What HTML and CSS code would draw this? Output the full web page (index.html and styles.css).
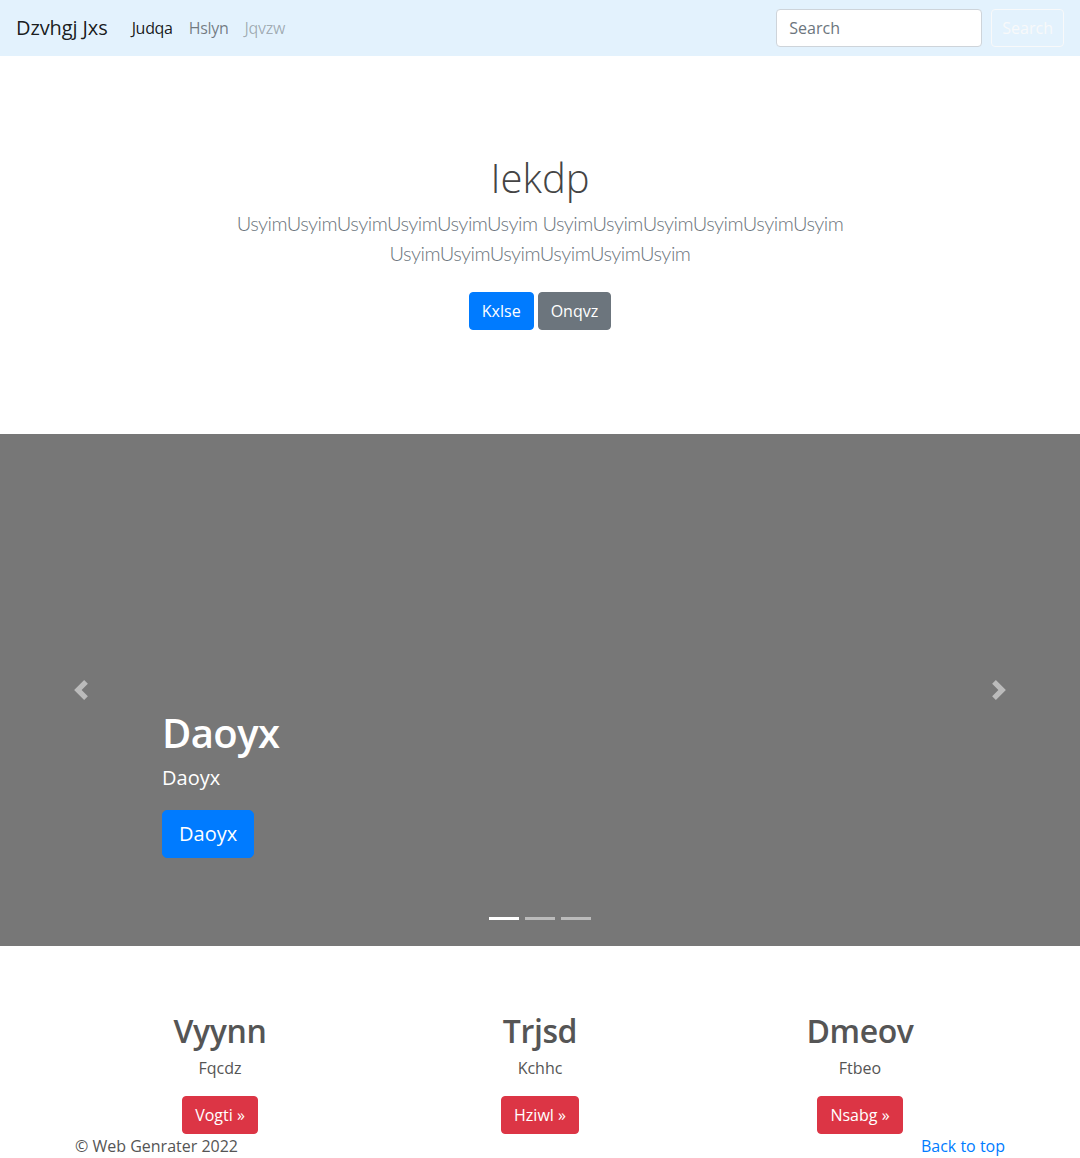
FILE: index.html
```html
<!DOCTYPE html>
<html lang="en">
<head>
<meta charset="utf-8">
<title>Dzvhgj Jxs</title>
<link rel="stylesheet" href="styles.css">
</head>
<body>
<header class="navbar">
  <a class="brand" href="#">Dzvhgj Jxs</a>
  <nav class="nav">
    <a class="nav-link active" href="#">Judqa</a>
    <a class="nav-link" href="#">Hslyn</a>
    <a class="nav-link disabled" href="#">Jqvzw</a>
  </nav>
  <form class="search-form">
    <input class="search-input" type="text" placeholder="Search">
    <button class="btn btn-outline-light" type="button">Search</button>
  </form>
</header>

<section class="hero">
  <div class="hero-inner">
    <h1 class="hero-title">Iekdp</h1>
    <p class="lead">UsyimUsyimUsyimUsyimUsyimUsyim UsyimUsyimUsyimUsyimUsyimUsyim UsyimUsyimUsyimUsyimUsyimUsyim</p>
    <p class="hero-actions">
      <a class="btn btn-primary" href="#">Kxlse</a>
      <a class="btn btn-secondary" href="#">Onqvz</a>
    </p>
  </div>
</section>

<section class="carousel">
  <a class="carousel-control prev" href="#">
    <svg width="20" height="20" viewBox="0 0 8 8"><path fill="#fff" d="M5.25 0l-4 4 4 4 1.5-1.5L4.25 4l2.5-2.5L5.25 0z"/></svg>
  </a>
  <div class="carousel-caption">
    <h1 class="caption-title">Daoyx</h1>
    <p class="caption-text">Daoyx</p>
    <p class="caption-action"><a class="btn btn-lg btn-primary" href="#">Daoyx</a></p>
  </div>
  <a class="carousel-control next" href="#">
    <svg width="20" height="20" viewBox="0 0 8 8"><path fill="#fff" d="M2.75 0l-1.5 1.5L3.75 4l-2.5 2.5L2.75 8l4-4-4-4z"/></svg>
  </a>
  <ol class="indicators">
    <li class="active"></li>
    <li></li>
    <li></li>
  </ol>
</section>

<section class="marketing">
  <div class="col">
    <h2>Vyynn</h2>
    <p>Fqcdz</p>
    <p class="col-action"><a class="btn btn-danger" href="#">Vogti &raquo;</a></p>
  </div>
  <div class="col">
    <h2>Trjsd</h2>
    <p>Kchhc</p>
    <p class="col-action"><a class="btn btn-danger" href="#">Hziwl &raquo;</a></p>
  </div>
  <div class="col">
    <h2>Dmeov</h2>
    <p>Ftbeo</p>
    <p class="col-action"><a class="btn btn-danger" href="#">Nsabg &raquo;</a></p>
  </div>
</section>

<footer class="footer">
  <p class="copy">&copy; Web Genrater 2022</p>
  <a class="back-top" href="#">Back to top</a>
</footer>
</body>
</html>
```

FILE: styles.css
```css
* { box-sizing: border-box; }
html, body { margin: 0; padding: 0; }
body {
  font-family: "Open Sans", "Noto Sans", sans-serif;
  font-size: 16px;
  line-height: 1.5;
  color: #555;
  background: #fff;
}
a { text-decoration: none; }
p { margin: 0; }
h1, h2 { margin: 0; }

/* navbar */
.navbar {
  height: 56px;
  background: #e3f2fd;
  display: flex;
  align-items: center;
  padding: 8px 16px;
}
.brand {
  font-size: 20px;
  line-height: 30px;
  color: rgba(0,0,0,.9);
  margin-right: 16px;
  letter-spacing: -0.1px;
}
.nav { display: flex; flex: 1; }
.nav-link {
  padding: 8px;
  color: rgba(0,0,0,.5);
  font-size: 16px;
  line-height: 24px;
  letter-spacing: -0.3px;
}
.nav-link.active { color: rgba(0,0,0,.9); }
.nav-link.disabled { color: rgba(0,0,0,.3); }
.search-form { display: flex; align-items: center; gap: 9px; }
.search-input {
  width: 206px;
  height: 38px;
  padding: 6px 12px;
  font: inherit;
  font-size: 16px;
  color: #495057;
  border: 1px solid #ced4da;
  border-radius: 4px;
  background: #fff;
}
.search-input::placeholder { color: #6c757d; }

.btn {
  display: inline-block;
  font-size: 16px;
  line-height: 24px;
  padding: 6px 12px;
  border: 1px solid transparent;
  border-radius: 4px;
  color: #fff;
  font-family: inherit;
  text-align: center;
}
.btn-outline-light {
  background: transparent;
  color: #f8f9fa;
  border-color: #f8f9fa;
  padding: 6px 10px;
}
.btn-primary { background: #007bff; border-color: #007bff; }
.btn-secondary { background: #6c757d; border-color: #6c757d; }
.btn-danger { background: #dc3545; border-color: #dc3545; }
.btn-lg { font-size: 20px; line-height: 30px; padding: 8px 16px; border-radius: 5px; }

/* hero */
.hero {
  padding: 98px 0 96px;
  text-align: center;
}
.hero-inner {
  max-width: 640px;
  margin: 0 auto;
  padding: 0 15px;
}
.hero-title {
  font-size: 40px;
  font-weight: 300;
  line-height: 48px;
  margin-bottom: 6px;
  color: #444;
}
.lead {
  font-family: Lato, "Open Sans", sans-serif;
  font-size: 20px;
  font-weight: 300;
  line-height: 30px;
  letter-spacing: -0.5px;
  color: #6c757d;
  margin-bottom: 16px;
}
.hero-actions { padding: 8px 0; display: flex; justify-content: center; gap: 4px; }

/* carousel */
.carousel {
  position: relative;
  height: 512px;
  background: #777;
  margin-bottom: 48px;
}
.carousel-control {
  position: absolute;
  top: 0;
  bottom: 0;
  width: 15%;
  display: flex;
  align-items: center;
  justify-content: center;
  opacity: .5;
}
.carousel-control.prev { left: 0; }
.carousel-control.next { right: 0; }
.carousel-caption {
  position: absolute;
  left: 15%;
  right: 15%;
  bottom: 48px;
  padding: 20px 0;
  color: #fff;
  text-align: left;
}
.caption-title {
  font-size: 40px;
  font-weight: 600;
  line-height: 48px;
  margin-bottom: 6px;
  letter-spacing: -0.6px;
}
.caption-text {
  font-size: 20px;
  line-height: 30px;
  margin-bottom: 17px;
}
.caption-action { margin-bottom: 20px; }
.indicators {
  position: absolute;
  left: 15%;
  right: 15%;
  bottom: 0;
  margin: 0 0 16px;
  padding: 0;
  list-style: none;
  display: flex;
  justify-content: center;
}
.indicators li {
  width: 30px;
  height: 3px;
  margin: 10px 3px;
  background: #fff;
  opacity: .5;
}
.indicators li.active { opacity: 1; }

/* marketing */
.marketing {
  width: 960px;
  margin: 0 auto;
  padding-top: 18px;
  display: grid;
  grid-template-columns: repeat(3, 1fr);
  text-align: center;
}
.col { padding: 0 15px; }
.col h2 {
  font-size: 32px;
  font-weight: 600;
  line-height: 38px;
  margin-bottom: 6px;
  color: #555;
  letter-spacing: -0.4px;
}
.col p { margin-bottom: 16px; }
.col p.col-action { margin-bottom: 0; }

/* footer */
.footer {
  width: 960px;
  margin: 0 auto;
  padding: 0 15px;
  display: flex;
  justify-content: space-between;
}
.back-top { color: #007bff; }
```
